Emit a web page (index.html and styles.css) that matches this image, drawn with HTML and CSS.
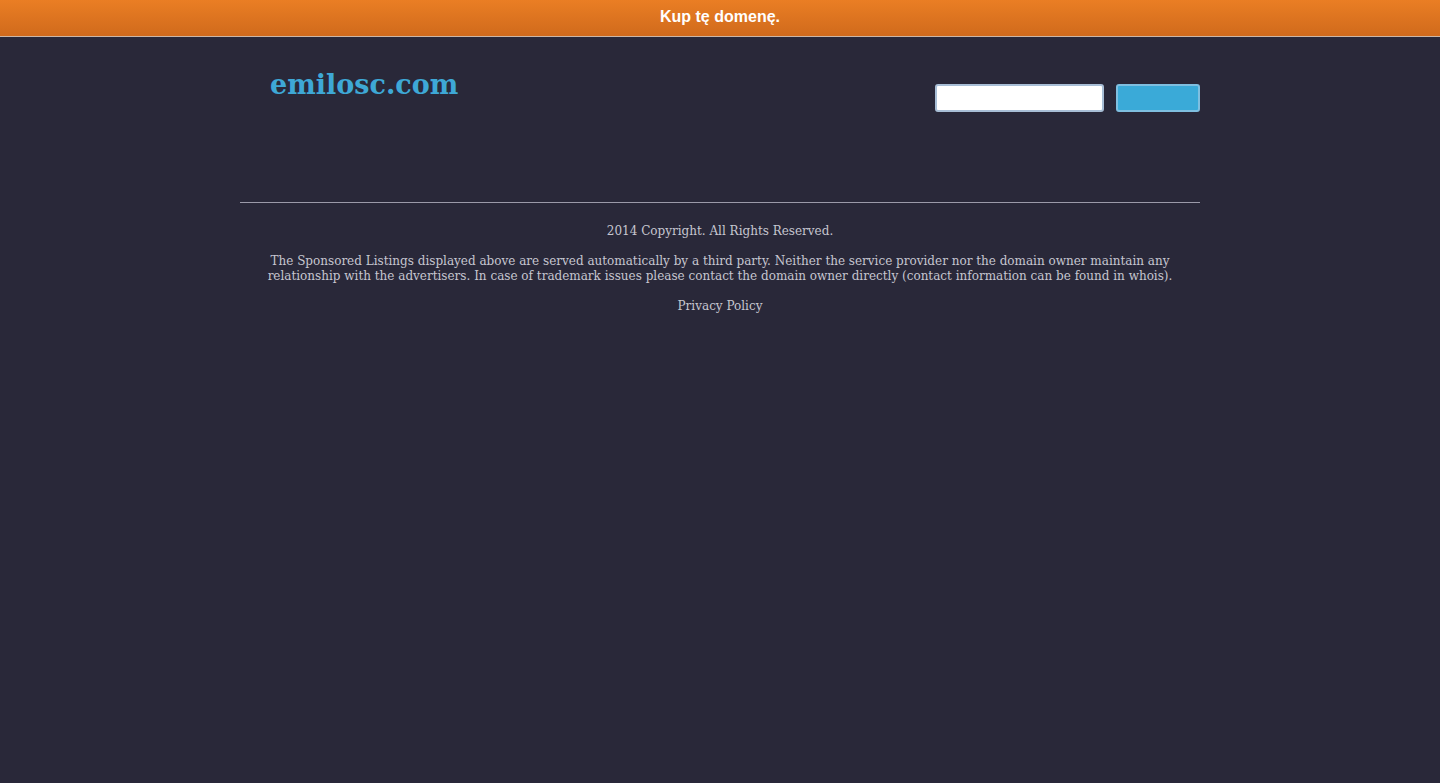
FILE: index.html
```html
<!DOCTYPE html>
<html lang="pl">
<head>
<meta charset="utf-8">
<title>emilosc.com</title>
<link rel="stylesheet" href="styles.css">
</head>
<body>
<div class="topbar"><a href="#">Kup tę domenę.</a></div>
<div class="container">
  <header class="header">
    <h1 class="logo">emilosc.com</h1>
    <form class="search">
      <input type="text" class="search-input">
      <button type="button" class="search-btn"></button>
    </form>
  </header>
  <footer class="footer">
    <p class="copy">2014 Copyright. All Rights Reserved.</p>
    <p class="disclaimer">The Sponsored Listings displayed above are served automatically by a third party. Neither the service provider nor the domain owner maintain any relationship with the advertisers. In case of trademark issues please contact the domain owner directly (contact information can be found in whois).</p>
    <p class="privacy"><a href="#">Privacy Policy</a></p>
  </footer>
</div>
</body>
</html>
```

FILE: styles.css
```css
html, body {
  margin: 0;
  padding: 0;
  background: #292839;
  height: 100%;
}
body {
  font-family: "DejaVu Serif", "Liberation Serif", serif;
}
.topbar {
  height: 36px;
  background: linear-gradient(#ea7e24, #d06a1c);
  border-bottom: 1px solid #cdb6a6;
  display: flex;
  align-items: center;
  justify-content: center;
}
.topbar a {
  color: #ffffff;
  font-family: "Liberation Sans", Arial, sans-serif;
  font-weight: bold;
  font-size: 16px;
  text-decoration: none;
  margin-top: -3px;
}
.container {
  width: 960px;
  margin: 0 auto;
}
.header {
  display: flex;
  justify-content: space-between;
  align-items: flex-start;
  padding: 0 0 0 30px;
  height: 165px;
  border-bottom: 1px solid #9b9aa9;
}
.logo {
  margin: 32px 0 0 0;
  font-family: "DejaVu Serif", serif;
  font-size: 27px;
  line-height: 32px;
  font-weight: bold;
  color: #3ea8d6;
}
.search {
  display: flex;
  gap: 12px;
  margin-top: 47px;
}
.search-input {
  box-sizing: border-box;
  width: 169px;
  height: 28px;
  border: 2px solid #a8bed6;
  border-radius: 3px;
  background: #fff;
  margin: 0;
}
.search-btn {
  box-sizing: border-box;
  width: 84px;
  height: 28px;
  border: 2px solid #7fbfe0;
  border-radius: 3px;
  background: #3aaad8;
  margin: 0;
}
.footer {
  text-align: center;
  color: #c6c6d0;
  font-size: 12px;
  line-height: 15px;
  padding: 21px 0;
}
.footer p {
  margin: 0 0 15px 0;
}
.footer a {
  color: #c6c6d0;
  text-decoration: none;
}
```
